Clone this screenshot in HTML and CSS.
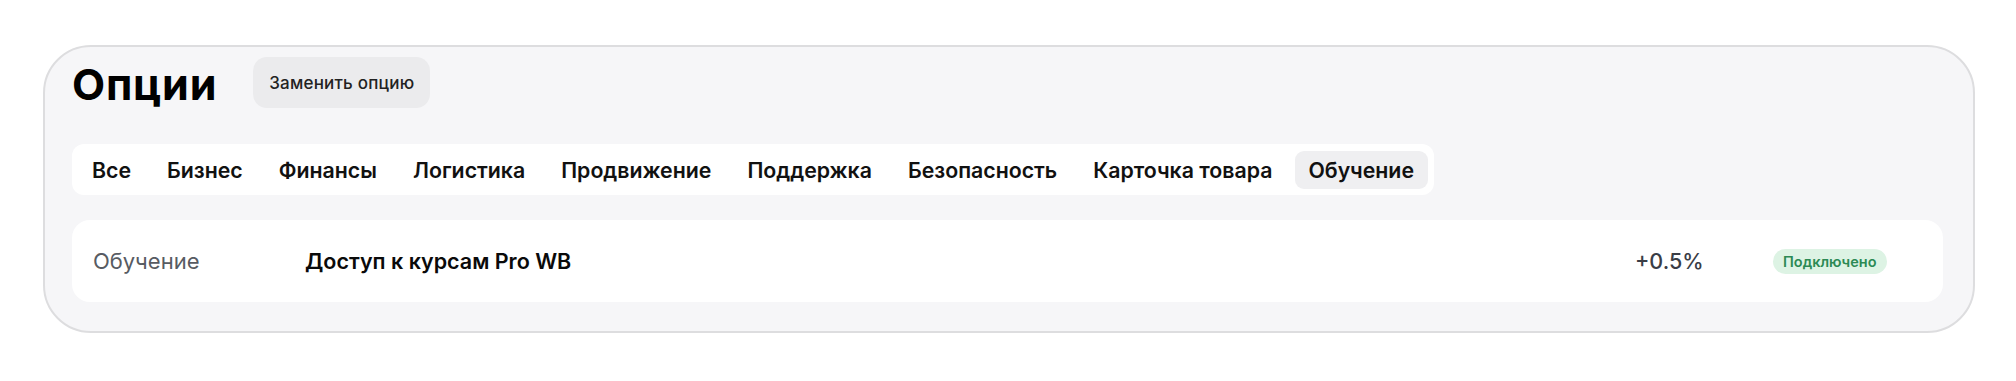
FILE: index.html
```html
<!DOCTYPE html>
<html lang="ru">
<head>
<meta charset="utf-8">
<title>Опции</title>
<link rel="stylesheet" href="styles.css">
</head>
<body>
<section class="options">
  <header class="options-head">
    <h1 class="options-title">Опции</h1>
    <button class="btn-replace" type="button">Заменить опцию</button>
  </header>
  <nav class="tabs">
    <span class="tab">Все</span>
    <span class="tab">Бизнес</span>
    <span class="tab">Финансы</span>
    <span class="tab">Логистика</span>
    <span class="tab">Продвижение</span>
    <span class="tab">Поддержка</span>
    <span class="tab">Безопасность</span>
    <span class="tab">Карточка товара</span>
    <span class="tab tab-active">Обучение</span>
  </nav>
  <div class="option-row">
    <span class="option-cat">Обучение</span>
    <span class="option-name">Доступ к курсам Pro WB</span>
    <span class="option-rate">+0.5%</span>
    <span class="option-status"><span class="badge">Подключено</span></span>
  </div>
</section>
</body>
</html>
```

FILE: styles.css
```css
* { box-sizing: border-box; }

html, body {
  margin: 0;
  padding: 0;
  background: #ffffff;
}

body {
  font-family: Inter, "Liberation Sans", Arial, sans-serif;
  color: #111111;
  padding: 45px 41px 0 43px;
}

.options {
  background: #f6f6f8;
  border: 2px solid #dddddf;
  border-radius: 48px;
  padding: 10px 30px 29px 27px;
}

.options-head {
  display: flex;
  align-items: center;
  gap: 36px;
  height: 51px;
}

.options-title {
  margin: 0;
  font-size: 43px;
  font-weight: 700;
  color: #000000;
  letter-spacing: 0.8px;
  line-height: 1;
  position: relative;
  top: 2px;
}

.btn-replace {
  font-family: inherit;
  font-size: 17px;
  font-weight: 500;
  color: #222222;
  background: #ebebed;
  border: none;
  border-radius: 14px;
  height: 51px;
  padding: 0 16px;
  letter-spacing: 0.2px;
}

.tabs {
  margin-top: 36px;
  display: inline-flex;
  gap: 8px;
  background: #ffffff;
  border-radius: 12px;
  padding: 6px;
  height: 51px;
  align-items: center;
}

.tab {
  font-size: 21.3px;
  font-weight: 600;
  color: #111111;
  padding: 0 14px;
  height: 38px;
  display: flex;
  align-items: center;
  border-radius: 9px;
  white-space: nowrap;
}

.tab-active {
  background: #efeff1;
}

.option-row {
  margin-top: 25px;
  background: #ffffff;
  border-radius: 18px;
  height: 82px;
  display: grid;
  grid-template-columns: 212px 1fr 138px 170px;
  align-items: center;
  padding-left: 21px;
}

.option-cat {
  font-size: 22px;
  font-weight: 400;
  color: #575b62;
}

.option-name {
  font-size: 21.5px;
  font-weight: 600;
  color: #0a0a0a;
}

.option-rate {
  font-size: 21.5px;
  font-weight: 500;
  color: #3a3d46;
}

.badge {
  display: inline-block;
  background: #ddf3e4;
  color: #2c8a54;
  font-size: 14.5px;
  font-weight: 600;
  border-radius: 13px;
  padding: 5px 10px;
  line-height: 15px;
}
```
